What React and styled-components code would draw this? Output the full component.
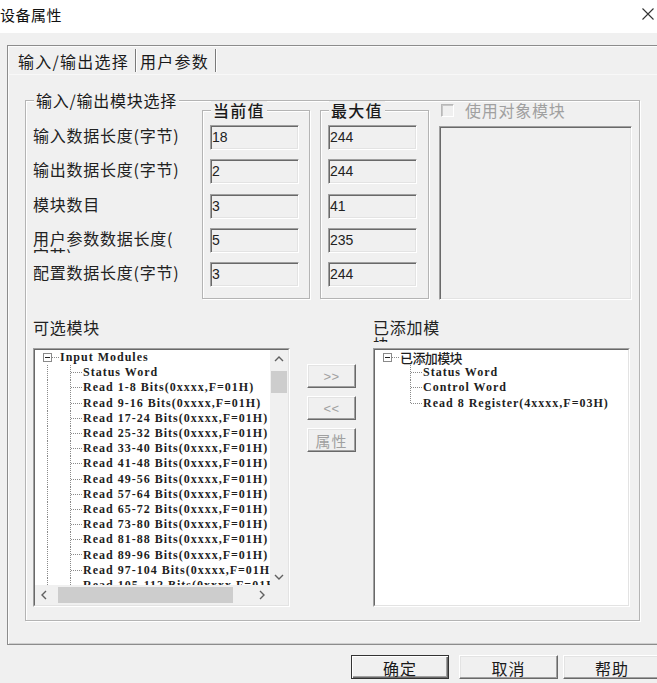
import React from 'react';
import styled, { createGlobalStyle, css } from 'styled-components';

const cjk = `"Noto Sans CJK SC", "Noto Sans", sans-serif`;
const treeFont = `"Liberation Serif", "DejaVu Serif", serif`;
const latin = `"Liberation Sans", Arial, sans-serif`;

const GlobalStyle = createGlobalStyle`
  html, body { margin: 0; padding: 0; }
  body {
    width: 657px;
    height: 683px;
    overflow: hidden;
    background: #f0f0f0;
    font-family: ${cjk};
    color: #222;
  }
  * { box-sizing: border-box; }
`;

/* ---------- shared bevels ---------- */
const sunken = css`
  border: 1px solid;
  border-color: #a0a0a0 #ffffff #ffffff #a0a0a0;
  box-shadow: inset 1px 1px 0 #696969, inset -1px -1px 0 #e3e3e3;
`;
const etched = css`
  border: 1px solid #b4b4b4;
  box-shadow: inset 1px 1px 0 #ffffff, 1px 1px 0 #ffffff;
`;
const raised = css`
  border: 1px solid;
  border-color: #ffffff #696969 #696969 #ffffff;
  box-shadow: inset -1px -1px 0 #a0a0a0, inset 1px 1px 0 #e3e3e3;
`;

/* ---------- window chrome ---------- */
const Window = styled.div`
  display: flex;
  flex-direction: column;
  width: 657px;
  height: 683px;
  overflow: hidden;
`;

const TitleBar = styled.header`
  flex: none;
  height: 33px;
  background: #fff;
  display: flex;
  align-items: center;
  justify-content: space-between;
  padding: 0 2px 5px 0;
`;

const Title = styled.span`
  font-size: 15px;
  letter-spacing: 0.5px;
  color: #111;
`;

const CloseButton = styled.span`
  display: flex;
  width: 14px;
  height: 14px;
`;

const Body = styled.div`
  flex: 1;
  display: flex;
  flex-direction: column;
  padding: 12px 0 0 7px;
`;

const Frame = styled.div`
  flex: none;
  height: 600px;
  margin-right: -6px;
  display: flex;
  flex-direction: column;
  border: 1px solid #8c8c8c;
  box-shadow: inset 1px 1px 0 #fcfcfc, inset 0 -1px 0 #cfcfcf;
`;

const TabStrip = styled.div`
  flex: none;
  height: 28px;
  display: flex;
  align-items: flex-start;
  padding: 3px 0 0 6px;
`;

const Tab = styled.div`
  height: 23px;
  display: flex;
  align-items: center;
  padding: 0 6px 0 4px;
  font-size: 16px;
  letter-spacing: 1.25px;
  color: #1a1a1a;
  border-right: 1px solid #7a7a7a;
  box-shadow: 1px 0 0 #ffffff;
`;

const TabPage = styled.div`
  flex: 1;
  border-top: 1px solid #f8f8f8;
  padding: 25px 0 0 17px;
`;

/* ---------- group boxes ---------- */
const GroupBox = styled.section`
  position: relative;
  width: 615px;
  height: 521px;
  ${etched};
  padding: 0 7px 12px 7px;
  display: flex;
  flex-direction: column;
`;

const Caption = styled.span`
  position: absolute;
  top: -10px;
  left: 8px;
  padding: 0 2px;
  background: #f0f0f0;
  font-size: 16px;
  line-height: 18px;
  letter-spacing: ${p => (p.$wide ? '1.25px' : '0.75px')};
  font-weight: ${p => (p.$bold ? 500 : 400)};
  color: #1a1a1a;
`;

const UpperGrid = styled.div`
  display: grid;
  grid-template-columns: 159px 108px 109px 1fr;
  column-gap: 10px;
  align-items: start;
`;

const LabelColumn = styled.div`
  display: flex;
  flex-direction: column;
  gap: 9.3px;
  padding-top: 24px;
`;

const FieldLabel = styled.div`
  height: 25px;
  overflow: hidden;
  padding-top: 2px;
  font-size: 16px;
  line-height: 17px;
  letter-spacing: 0.75px;
  white-space: nowrap;
  color: #222;
`;

const ValueGroup = styled.div`
  position: relative;
  margin-top: 9px;
  height: 189px;
  ${etched};
  padding: 14px 0 0 7px;
  display: flex;
  flex-direction: column;
  gap: 9.3px;
`;

const ValueBox = styled.div`
  width: 89px;
  height: 25px;
  ${sunken};
  padding-left: 1px;
  font-family: ${latin};
  font-size: 14px;
  line-height: 22px;
  color: #222;
`;

const RightColumn = styled.div`
  display: flex;
  flex-direction: column;
`;

const CheckRow = styled.label`
  height: 18px;
  display: flex;
  align-items: center;
  gap: 11px;
  padding-left: 2px;
  font-size: 16px;
  letter-spacing: 0.75px;
  color: #a0a0a0;
`;

const CheckBox = styled.span`
  width: 13px;
  height: 13px;
  border: 1px solid;
  border-color: #b8b8b8 #ffffff #ffffff #b8b8b8;
  box-shadow: inset 1px 1px 0 #c8c8c8;
  background: #f0f0f0;
`;

const ObjectPanel = styled.div`
  margin-top: 7px;
  height: 174px;
  ${sunken};
  background: #f0f0f0;
`;

/* ---------- module lists ---------- */
const LowerGrid = styled.div`
  margin-top: 18px;
  display: grid;
  grid-template-columns: 257px 49px 257px;
  grid-template-rows: 24px 259px;
  column-gap: 17px;
  row-gap: 6px;
`;

const SectionLabel = styled.div`
  grid-column: ${p => p.$col};
  width: ${p => p.$w}px;
  height: 24px;
  overflow: hidden;
  padding-top: 1px;
  font-size: 16px;
  line-height: 17px;
  letter-spacing: 0.75px;
  color: #222;
`;

const ListFrame = styled.div`
  grid-row: 2;
  grid-column: ${p => p.$col};
  border: 1px solid;
  border-color: #a0a0a0 #ffffff #ffffff #a0a0a0;
  display: flex;
`;

const ListInner = styled.div`
  flex: 1;
  border: 1px solid;
  border-color: #696969 #e3e3e3 #e3e3e3 #696969;
  background: #fff;
  overflow: hidden;
  display: grid;
  grid-template-columns: ${p => (p.$scroll ? '1fr 18px' : '1fr')};
  grid-template-rows: ${p => (p.$scroll ? '1fr 20px' : '1fr')};
`;

const TreeArea = styled.div`
  overflow: hidden;
  color: #1e1e1e;
`;

const TreeRow = styled.div`
  display: flex;
  align-items: stretch;
  height: 15.2px;
  white-space: nowrap;
`;

const Indent = styled.span`
  flex: none;
  width: ${p => p.$w}px;
`;

const VLine = styled.span`
  flex: none;
  width: 1px;
  background: linear-gradient(#8a8a8a 50%, transparent 0) 0 0 / 1px 2px repeat-y;
  ${p => p.$upper && css`height: 8px;`}
`;

const HLine = styled.span`
  flex: none;
  width: ${p => p.$w}px;
  background: linear-gradient(to right, #8a8a8a 50%, transparent 0) 0 7px / 2px 1px repeat-x;
`;

const Expander = styled.span`
  flex: none;
  align-self: center;
  width: 9px;
  height: 9px;
  border: 1px solid #8a8a8a;
  background: #fff;
  display: flex;
  align-items: center;
  justify-content: center;
`;

const Minus = styled.span`
  width: 5px;
  height: 1px;
  background: #222;
`;

const ItemText = styled.span`
  display: flex;
  align-items: center;
  font-family: ${p => (p.$cjk ? cjk : treeFont)};
  font-size: ${p => (p.$cjk ? '13px' : '12px')};
  font-weight: ${p => (p.$cjk ? 500 : 700)};
  letter-spacing: ${p => (p.$cjk ? '-0.6px' : '1px')};
`;

const VScroll = styled.div`
  background: #f0f0f0;
  display: flex;
  flex-direction: column;
`;

const HScroll = styled.div`
  background: #f0f0f0;
  display: flex;
  align-items: stretch;
`;

const ScrollArrow = styled.span`
  flex: none;
  width: ${p => (p.$h ? '17px' : '100%')};
  height: ${p => (p.$h ? '100%' : '17px')};
  display: flex;
  align-items: center;
  justify-content: center;
`;

const Thumb = styled.span`
  flex: none;
  background: #cdcdcd;
  ${p =>
    p.$h
      ? css`width: 175px; margin: 2px 0 2px 6px;`
      : css`height: 22px; margin: 4px 1px 0 1px;`}
`;

const Spacer = styled.span`flex: 1;`;

const Corner = styled.div`background: #f0f0f0;`;

const MoveColumn = styled.div`
  grid-row: 2;
  grid-column: 2;
  display: flex;
  flex-direction: column;
  gap: 8px;
  padding-top: 16px;
`;

const MoveButton = styled.div`
  height: 24px;
  ${raised};
  background: #f0f0f0;
  display: flex;
  align-items: center;
  justify-content: center;
  color: #a0a0a0;
  font-family: ${p => (p.$cjk ? cjk : latin)};
  font-size: ${p => (p.$cjk ? '15px' : '13px')};
  letter-spacing: ${p => (p.$cjk ? '1px' : '0.5px')};
`;

/* ---------- dialog buttons ---------- */
const ButtonRow = styled.div`
  flex: none;
  margin: 10px -4px 0 0;
  display: flex;
  justify-content: flex-end;
`;

const DialogButton = styled.button`
  flex: none;
  width: ${p => p.$w}px;
  height: 24px;
  margin-left: ${p => p.$gap}px;
  padding: 0;
  background: #f0f0f0;
  font-family: ${cjk};
  font-size: 16px;
  letter-spacing: 1px;
  color: #1a1a1a;
  ${p =>
    p.$primary
      ? css`
          border: 1px solid #333;
          box-shadow: inset 1px 1px 0 #ffffff, inset -1px -1px 0 #696969, inset -2px -2px 0 #a0a0a0;
        `
      : raised};
`;

/* ---------- icons ---------- */
const CloseIcon = () => (
  <svg width="14" height="14" viewBox="0 0 14 14">
    <path d="M1.5 1.5 L12.5 12.5 M12.5 1.5 L1.5 12.5" stroke="#333" strokeWidth="1.1" fill="none" />
  </svg>
);

const Chevron = ({ dir }) => {
  const paths = {
    up: 'M1 6 L5 2 L9 6',
    down: 'M1 2 L5 6 L9 2',
    left: 'M6 1 L2 5 L6 9',
    right: 'M2 1 L6 5 L2 9',
  };
  const vertical = dir === 'up' || dir === 'down';
  return (
    <svg width={vertical ? 10 : 8} height={vertical ? 8 : 10} viewBox={vertical ? '0 0 10 8' : '0 0 8 10'}>
      <path d={paths[dir]} stroke="#606060" strokeWidth="1.4" fill="none" />
    </svg>
  );
};

/* ---------- data ---------- */
const fields = [
  { label: '输入数据长度(字节)', cur: '18', max: '244' },
  { label: '输出数据长度(字节)', cur: '2', max: '244' },
  { label: '模块数目', cur: '3', max: '41' },
  { label: ['用户参数数据长度(', '字节)'], cur: '5', max: '235' },
  { label: '配置数据长度(字节)', cur: '3', max: '244' },
];

const bitRanges = [
  '1-8', '9-16', '17-24', '25-32', '33-40', '41-48', '49-56', '57-64',
  '65-72', '73-80', '81-88', '89-96', '97-104', '105-112', '113-120',
];
const availableModules = ['Status Word', ...bitRanges.map(r => `Read ${r} Bits(0xxxx,F=01H)`)];
const addedModules = ['Status Word', 'Control Word', 'Read 8 Register(4xxxx,F=03H)'];

/* ---------- parts ---------- */
const AvailableTree = () => (
  <TreeArea>
    <TreeRow>
      <Indent $w={8} />
      <Expander><Minus /></Expander>
      <HLine $w={8} />
      <ItemText>Input Modules</ItemText>
    </TreeRow>
    {availableModules.map(name => (
      <TreeRow key={name}>
        <Indent $w={12} />
        <VLine />
        <Indent $w={22} />
        <VLine />
        <HLine $w={12} />
        <ItemText>{name}</ItemText>
      </TreeRow>
    ))}
  </TreeArea>
);

const AddedTree = () => (
  <TreeArea>
    <TreeRow>
      <Indent $w={8} />
      <Expander><Minus /></Expander>
      <HLine $w={8} />
      <ItemText $cjk>已添加模块</ItemText>
    </TreeRow>
    {addedModules.map((name, i) => (
      <TreeRow key={name}>
        <Indent $w={35} />
        <VLine $upper={i === addedModules.length - 1} />
        <HLine $w={12} />
        <ItemText>{name}</ItemText>
      </TreeRow>
    ))}
  </TreeArea>
);

export default function App() {
  return (
    <>
      <GlobalStyle />
      <Window>
        <TitleBar>
          <Title>设备属性</Title>
          <CloseButton><CloseIcon /></CloseButton>
        </TitleBar>
        <Body>
          <Frame>
            <TabStrip>
              <Tab>输入/输出选择</Tab>
              <Tab>用户参数</Tab>
            </TabStrip>
            <TabPage>
              <GroupBox>
                <Caption>输入/输出模块选择</Caption>
                <UpperGrid>
                  <LabelColumn>
                    {fields.map((f, i) => (
                      <FieldLabel key={i}>
                        {Array.isArray(f.label) ? (
                          <>
                            {f.label[0]}
                            <br />
                            {f.label[1]}
                          </>
                        ) : (
                          f.label
                        )}
                      </FieldLabel>
                    ))}
                  </LabelColumn>
                  <ValueGroup>
                    <Caption $wide $bold>当前值</Caption>
                    {fields.map((f, i) => (
                      <ValueBox key={i}>{f.cur}</ValueBox>
                    ))}
                  </ValueGroup>
                  <ValueGroup>
                    <Caption $wide $bold>最大值</Caption>
                    {fields.map((f, i) => (
                      <ValueBox key={i}>{f.max}</ValueBox>
                    ))}
                  </ValueGroup>
                  <RightColumn>
                    <CheckRow>
                      <CheckBox />
                      使用对象模块
                    </CheckRow>
                    <ObjectPanel />
                  </RightColumn>
                </UpperGrid>

                <LowerGrid>
                  <SectionLabel $col={1} $w={120}>可选模块</SectionLabel>
                  <SectionLabel $col={3} $w={72}>已添加模块</SectionLabel>

                  <ListFrame $col={1}>
                    <ListInner $scroll>
                      <AvailableTree />
                      <VScroll>
                        <ScrollArrow><Chevron dir="up" /></ScrollArrow>
                        <Thumb />
                        <Spacer />
                        <ScrollArrow><Chevron dir="down" /></ScrollArrow>
                      </VScroll>
                      <HScroll>
                        <ScrollArrow $h><Chevron dir="left" /></ScrollArrow>
                        <Thumb $h />
                        <Spacer />
                        <ScrollArrow $h><Chevron dir="right" /></ScrollArrow>
                      </HScroll>
                      <Corner />
                    </ListInner>
                  </ListFrame>

                  <MoveColumn>
                    <MoveButton>&gt;&gt;</MoveButton>
                    <MoveButton>&lt;&lt;</MoveButton>
                    <MoveButton $cjk>属性</MoveButton>
                  </MoveColumn>

                  <ListFrame $col={3}>
                    <ListInner>
                      <AddedTree />
                    </ListInner>
                  </ListFrame>
                </LowerGrid>
              </GroupBox>
            </TabPage>
          </Frame>
          <ButtonRow>
            <DialogButton $w={98} $gap={0} $primary>确定</DialogButton>
            <DialogButton $w={99} $gap={10}>取消</DialogButton>
            <DialogButton $w={98} $gap={5}>帮助</DialogButton>
          </ButtonRow>
        </Body>
      </Window>
    </>
  );
}
